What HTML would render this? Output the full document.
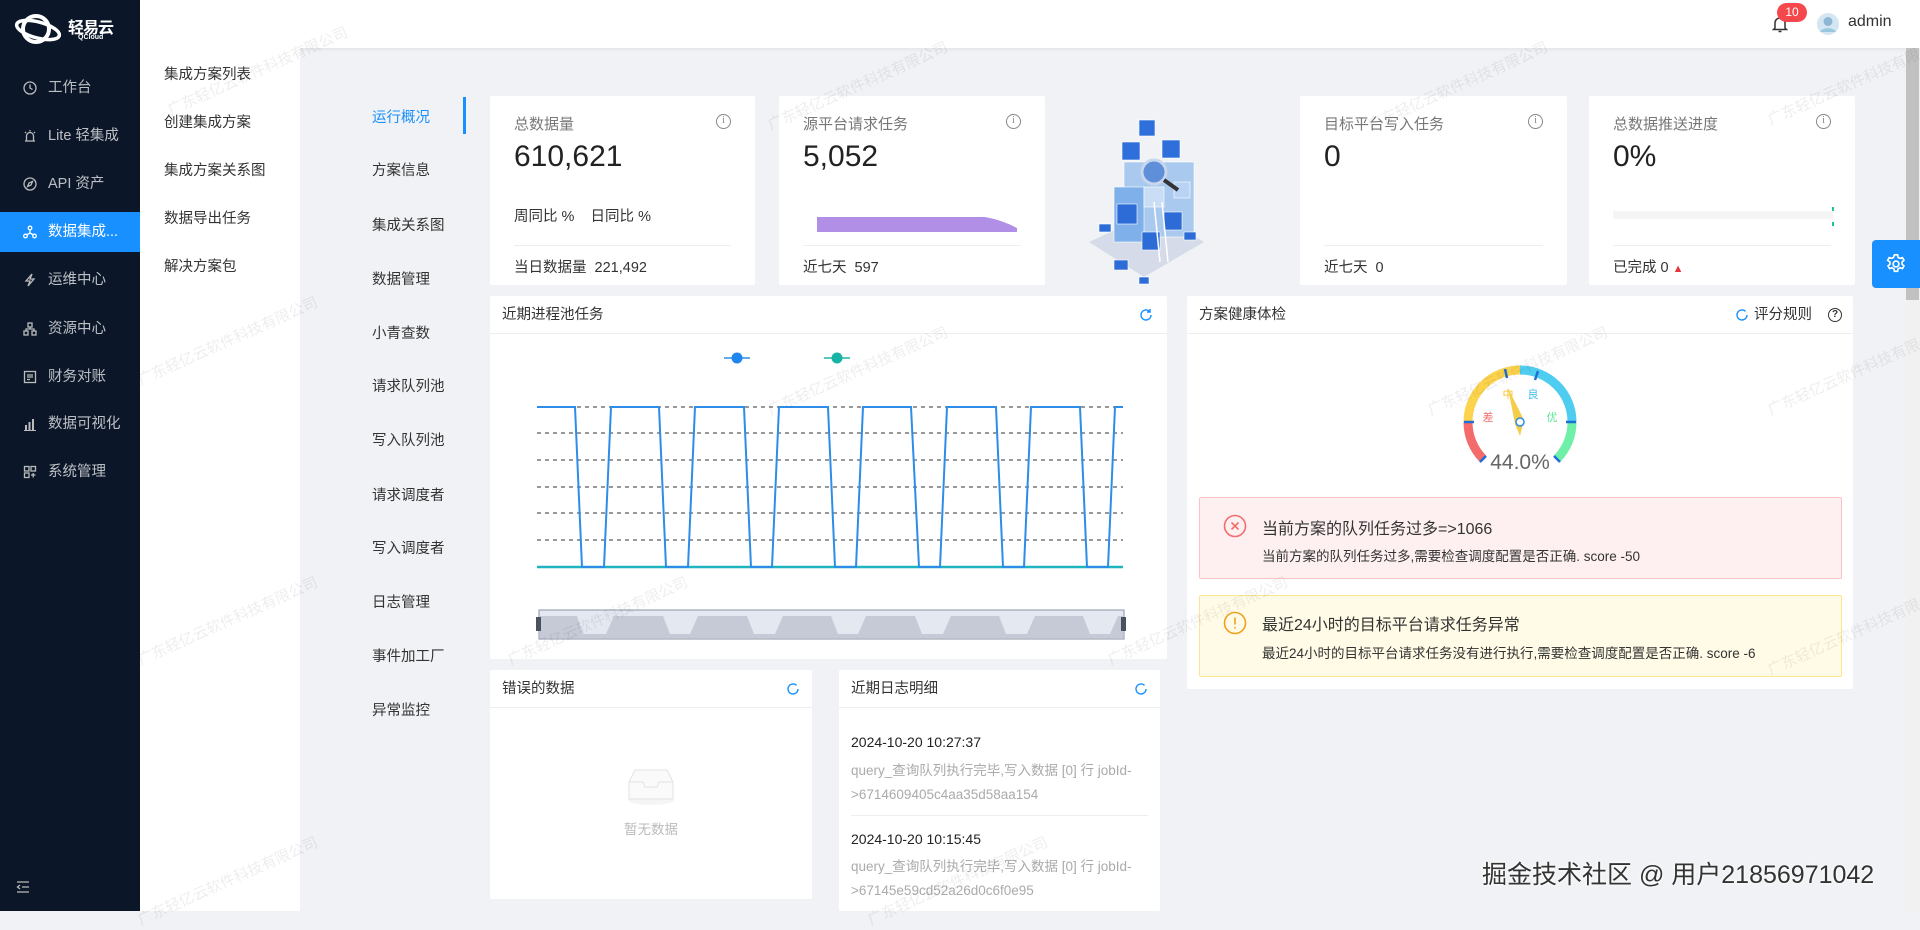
<!DOCTYPE html>
<html><head><meta charset="utf-8">
<style>
*{margin:0;padding:0;box-sizing:border-box}
body{width:1920px;height:911px;overflow:hidden;background:#f0f2f5;font-family:"Liberation Sans","Noto Sans CJK SC",sans-serif;color:#333;position:relative}
.a{position:absolute}
.side{left:0;top:0;width:140px;height:911px;background:#0b1729}
.mi{position:absolute;left:0;width:140px;height:40px;color:rgba(255,255,255,.72);font-size:14.5px;line-height:40px;padding-left:48px}
.mi svg{position:absolute;left:23px;top:13px}
.mi.on{background:#1890ff;color:#fff}
.hdr{left:140px;top:0;width:1780px;height:48px;background:#fff;box-shadow:0 1px 4px rgba(0,21,41,.08)}
.sub{left:140px;top:48px;width:160px;height:863px;background:#fff}
.si{position:absolute;left:24px;font-size:14.5px;color:#333}
.ti{position:absolute;left:372px;font-size:14.5px;color:#333}
.card{position:absolute;background:#fff;border-radius:2px}
.ct{position:absolute;left:24px;top:17px;font-size:15px;color:#777}
.num{position:absolute;left:24px;top:44px;font-size:30px;color:#222}
.info{position:absolute;right:24px;top:18px;width:15px;height:15px;border:1.3px solid #888;border-radius:50%;font-size:10px;line-height:12px;text-align:center;color:#888;font-family:"Liberation Serif",serif}
.dv{position:absolute;left:24px;right:24px;top:149px;border-top:1px solid #eee}
.ft{position:absolute;left:24px;top:160px;font-size:14.5px;color:#333}
.ph{position:absolute;left:0;right:0;top:0;height:38px;border-bottom:1px solid #eee;font-size:14.5px;line-height:38px;padding-left:12px;color:#333}
.wm{position:absolute;font-size:15px;color:rgba(0,0,0,.07);transform:rotate(-24deg);white-space:nowrap;pointer-events:none}
</style></head><body>

<div class="a side">
  <svg class="a" style="left:14px;top:13px" width="48" height="32" viewBox="0 0 48 32"><ellipse cx="22" cy="16" rx="13" ry="13" fill="none" stroke="#fff" stroke-width="4"/><ellipse cx="24" cy="17" rx="22" ry="8" fill="none" stroke="#fff" stroke-width="3.5" transform="rotate(15 24 17)"/></svg>
  <div class="a" style="left:68px;top:14px;color:#fff;font-size:16px;font-weight:bold;letter-spacing:-1px">轻易云</div>
  <div class="a" style="left:78px;top:34px;color:#fff;font-size:7px;font-weight:bold">QCloud</div>
  <div class="mi" style="top:68px"><svg width="14" height="14" viewBox="0 0 14 14" fill="none" stroke="#bbb" stroke-width="1.3"><circle cx="7" cy="7" r="6"/><path d="M7 3.5V7l2.5 1.5"/></svg>工作台</div>
  <div class="mi" style="top:116px"><svg width="14" height="14" viewBox="0 0 14 14" fill="none" stroke="#bbb" stroke-width="1.3"><path d="M2 12h10M3.5 12V7a3.5 3.5 0 0 1 7 0v5M7 1v1.5M2 3l1 1M12 3l-1 1"/></svg>Lite 轻集成</div>
  <div class="mi" style="top:164px"><svg width="14" height="14" viewBox="0 0 14 14" fill="none" stroke="#bbb" stroke-width="1.3"><circle cx="7" cy="7" r="6"/><path d="M9.5 4.5L6 6 4.5 9.5 8 8z"/></svg>API 资产</div>
  <div class="mi on" style="top:212px"><svg width="14" height="14" viewBox="0 0 14 14" fill="none" stroke="#fff" stroke-width="1.3"><circle cx="7" cy="3" r="1.8"/><circle cx="2.5" cy="11" r="1.8"/><circle cx="11.5" cy="11" r="1.8"/><path d="M7 5v3L3.5 10M7 8l3.5 2"/></svg>数据集成...</div>
  <div class="mi" style="top:260px"><svg width="14" height="14" viewBox="0 0 14 14" fill="none" stroke="#bbb" stroke-width="1.3"><path d="M9 1L3 8h4l-2 5 6-7H7z"/></svg>运维中心</div>
  <div class="mi" style="top:309px"><svg width="14" height="14" viewBox="0 0 14 14" fill="none" stroke="#bbb" stroke-width="1.3"><rect x="5" y="1" width="4" height="4"/><rect x="1" y="9" width="4" height="4"/><rect x="9" y="9" width="4" height="4"/><path d="M7 5v2M3 9V7h8v2"/></svg>资源中心</div>
  <div class="mi" style="top:357px"><svg width="14" height="14" viewBox="0 0 14 14" fill="none" stroke="#bbb" stroke-width="1.3"><rect x="1.5" y="1.5" width="11" height="11"/><path d="M4 5h6M4 7h6M4 9.5h3"/></svg>财务对账</div>
  <div class="mi" style="top:404px"><svg width="14" height="14" viewBox="0 0 14 14" fill="#bbb"><path d="M1 13h12v1H1zM2 8h2v5H2zM5.5 5h2v8h-2zM9 2h2v11H9z"/></svg>数据可视化</div>
  <div class="mi" style="top:452px"><svg width="14" height="14" viewBox="0 0 14 14" fill="none" stroke="#bbb" stroke-width="1.3"><rect x="1.5" y="1.5" width="4.5" height="4.5"/><rect x="8" y="1.5" width="4.5" height="4.5"/><rect x="1.5" y="8" width="4.5" height="4.5"/><path d="M8 10h4.5M10.2 8v4.5"/></svg>系统管理</div>
  <svg class="a" style="left:16px;top:880px" width="14" height="14" viewBox="0 0 14 14" fill="none" stroke="#bbb" stroke-width="1.3"><path d="M1 2h12M6 7h7M1 12h12M4 5L1.5 7 4 9"/></svg>
</div>

<div class="a hdr"></div>
<svg class="a" style="left:1772px;top:15px" width="16" height="18" viewBox="0 0 16 18" fill="none" stroke="#333" stroke-width="1.5"><path d="M3 13V8a5 5 0 0 1 10 0v5l1.5 1.5h-13zM6.5 16.5h3"/></svg>
<div class="a" style="left:1777px;top:3px;width:30px;height:19px;background:#f5484d;border-radius:10px;color:#fff;font-size:12px;line-height:19px;text-align:center">10</div>
<svg class="a" style="left:1817px;top:13px" width="22" height="22" viewBox="0 0 22 22"><circle cx="11" cy="11" r="11" fill="#d3e6f2"/><circle cx="11" cy="8.5" r="4.5" fill="#8fb7d5"/><path d="M3 19c2-5 14-5 16 0" fill="#9ac7e0"/></svg>
<div class="a" style="left:1848px;top:13px;font-size:16px;color:#333">admin</div>

<div class="a sub">
  <div class="si" style="top:15px">集成方案列表</div>
  <div class="si" style="top:63px">创建集成方案</div>
  <div class="si" style="top:111px">集成方案关系图</div>
  <div class="si" style="top:159px">数据导出任务</div>
  <div class="si" style="top:207px">解决方案包</div>
</div>

<div class="ti" style="top:106px;color:#1890ff">运行概况</div>
<div class="a" style="left:463px;top:97px;width:3px;height:37px;background:#1890ff"></div>
<div class="ti" style="top:159px">方案信息</div>
<div class="ti" style="top:214px">集成关系图</div>
<div class="ti" style="top:268px">数据管理</div>
<div class="ti" style="top:322px">小青查数</div>
<div class="ti" style="top:375px">请求队列池</div>
<div class="ti" style="top:429px">写入队列池</div>
<div class="ti" style="top:484px">请求调度者</div>
<div class="ti" style="top:537px">写入调度者</div>
<div class="ti" style="top:591px">日志管理</div>
<div class="ti" style="top:645px">事件加工厂</div>
<div class="ti" style="top:699px">异常监控</div>

<div class="card" style="left:490px;top:96px;width:265px;height:189px">
  <div class="ct">总数据量</div><div class="info">i</div>
  <div class="num">610,621</div>
  <div class="a" style="left:24px;top:109px;font-size:14.5px">周同比 %&nbsp;&nbsp;&nbsp;&nbsp;日同比 %</div>
  <div class="dv"></div><div class="ft">当日数据量&nbsp;&nbsp;221,492</div>
</div>
<div class="card" style="left:779px;top:96px;width:266px;height:189px">
  <div class="ct">源平台请求任务</div><div class="info">i</div>
  <div class="num">5,052</div>
  <svg class="a" style="left:38px;top:121px" width="200" height="15"><path d="M0 0H168Q185 3 200 11V15H0z" fill="#b28fe6"/></svg>
  <div class="dv"></div><div class="ft">近七天&nbsp;&nbsp;597</div>
</div>
<svg class="a" style="left:1084px;top:92px" width="145" height="200" viewBox="0 0 145 200">
  <path d="M5 150L70 120L120 150L60 185z" fill="#d5dbe8"/>
  <g stroke="#fff" stroke-width=".6">
  <rect x="40" y="70" width="70" height="75" fill="#a9c9ee"/>
  <rect x="30" y="95" width="30" height="55" fill="#7fb0ea"/>
  <rect x="38" y="50" width="18" height="18" fill="#2f6fdb"/>
  <rect x="78" y="48" width="18" height="18" fill="#2f6fdb"/>
  <rect x="55" y="28" width="16" height="16" fill="#2f6fdb"/>
  <rect x="33" y="112" width="20" height="20" fill="#2d6bd6"/>
  <rect x="80" y="120" width="18" height="18" fill="#2d6bd6"/>
  <rect x="58" y="140" width="18" height="18" fill="#2d6bd6"/>
  <rect x="60" y="95" width="20" height="20" fill="#c9ddf5"/>
  <rect x="90" y="90" width="16" height="16" fill="#b8d3f3"/>
  <rect x="15" y="132" width="12" height="8" fill="#2d6bd6"/>
  <rect x="30" y="168" width="14" height="10" fill="#2d6bd6"/>
  <rect x="100" y="140" width="12" height="8" fill="#2d6bd6"/>
  <rect x="55" y="185" width="10" height="7" fill="#2d6bd6"/>
  </g>
  <circle cx="70" cy="80" r="12" fill="#5f8fd8" stroke="#c8d6ee" stroke-width="3"/>
  <path d="M80 88l14 10" stroke="#333" stroke-width="4"/>
  <path d="M70 110l6 60M78 110l6 60" stroke="#fff" stroke-width="1.5"/>
</svg>
<div class="card" style="left:1300px;top:96px;width:267px;height:189px">
  <div class="ct">目标平台写入任务</div><div class="info">i</div>
  <div class="num">0</div>
  <div class="dv"></div><div class="ft">近七天&nbsp;&nbsp;0</div>
</div>
<div class="card" style="left:1589px;top:96px;width:266px;height:189px">
  <div class="ct">总数据推送进度</div><div class="info">i</div>
  <div class="num">0%</div>
  <div class="a" style="left:24px;top:115px;width:220px;height:8px;background:#f5f5f5"></div>
  <div class="a" style="left:243px;top:111px;width:2px;height:4px;background:#1fc29a"></div>
  <div class="a" style="left:243px;top:126px;width:2px;height:4px;background:#1fc29a"></div>
  <div class="dv"></div><div class="ft">已完成 0 <span style="color:#e8343c;font-size:11px">▲</span></div>
</div>

<div class="card" style="left:490px;top:296px;width:677px;height:363px">
  <div class="ph">近期进程池任务</div>
  <svg class="a" style="right:14px;top:12px" width="14" height="14" viewBox="0 0 14 14" fill="none" stroke="#1890ff" stroke-width="1.4"><path d="M12 7a5 5 0 1 1-1.5-3.6M11 1v3H8"/></svg>
</div>
<svg class="a" style="left:0;top:0" width="1920" height="911">
  <g stroke="#333" stroke-width="1" stroke-dasharray="4 4">
    <path d="M537 407H1123M537 433H1123M537 460H1123M537 487H1123M537 513H1123M537 540H1123"/>
  </g>
  <path d="M537 567H1123" stroke="#1fb5c0" stroke-width="2.5"/>
  <polyline fill="none" stroke="#2d8de8" stroke-width="2" points="537,407 575,407 582,567 604,567 611,407 659,407 666,567 688,567 695,407 744,407 751,567 772,567 779,407 828,407 835,567 856,567 863,407 911,407 919,567 940,567 947,407 996,407 1003,567 1024,567 1031,407 1080,407 1087,567 1108,567 1115,407 1123,407"/>
  <path d="M724 358h26" stroke="#2d8de8" stroke-width="1.5"/><circle cx="737" cy="358" r="5.5" fill="#1f86f0"/>
  <path d="M824 358h26" stroke="#1fb5a8" stroke-width="1.5"/><circle cx="837" cy="358" r="5.5" fill="#17b3a3"/>
  <rect x="539" y="610" width="585" height="29" fill="#e4e8f1" stroke="#8a93a6"/>
  <path d="M540 616H577L583 634H606L614 616H663L670 634H690L698 616H747L754 634H775L783 616H831L838 634H858L866 616H915L922 634H943L951 616H999L1006 634H1027L1035 616H1083L1090 634H1110L1118 616H1123V638H540z" fill="#c6cad6"/>
  <rect x="536" y="617" width="5" height="14" fill="#4a5260"/><rect x="1121" y="617" width="5" height="14" fill="#4a5260"/>
</svg>

<div class="card" style="left:1187px;top:296px;width:666px;height:393px">
  <div class="ph" style="padding-left:12px">方案健康体检</div>
  <div class="a" style="right:41px;top:0;line-height:38px;font-size:14.5px">评分规则</div>
  <svg class="a" style="right:104px;top:12px" width="14" height="14" viewBox="0 0 14 14" fill="none" stroke="#1890ff" stroke-width="1.4"><path d="M12 7a5 5 0 1 1-1.5-3.6"/></svg>
  <div class="a" style="right:11px;top:12px;width:14px;height:14px;border:1.3px solid #333;border-radius:50%;font-size:10px;line-height:11px;text-align:center;font-weight:bold">?</div>
</div>
<svg class="a" style="left:1450px;top:355px" width="140" height="130" viewBox="1450 355 140 130">
  <g fill="none" stroke-width="9">
    <path d="M1483.1 458.9A52 52 0 0 1 1468 422" stroke="#f46b6b"/>
    <path d="M1468 422A52 52 0 0 1 1520 370" stroke="#fcd34d"/>
    <path d="M1520 370A52 52 0 0 1 1572 422" stroke="#4fcdf0"/>
    <path d="M1572 422A52 52 0 0 1 1556.9 458.9" stroke="#6ef0a8"/>
  </g>
  <g stroke="#1f6fd6" stroke-width="2.5">
    <path d="M1464 422h10M1566 422h10M1480 462l6-6M1560 462l-6-6M1505 369l2 9M1538 371l-3 9"/>
  </g>
  <text x="1488" y="421" font-size="11" fill="#f46b6b" text-anchor="middle" font-family="Noto Sans CJK SC">差</text>
  <text x="1508" y="398" font-size="11" fill="#f4c22b" text-anchor="middle" font-family="Noto Sans CJK SC">中</text>
  <text x="1533" y="398" font-size="11" fill="#3fc0ea" text-anchor="middle" font-family="Noto Sans CJK SC">良</text>
  <text x="1552" y="421" font-size="11" fill="#5ee59a" text-anchor="middle" font-family="Noto Sans CJK SC">优</text>
  <path d="M1508 388L1524 420L1520 436L1515 424z" fill="#f5cd48"/>
  <circle cx="1520" cy="422" r="4" fill="#fff" stroke="#2d8de8" stroke-width="1.5"/>
  <text x="1520" y="469" font-size="21" fill="#666" text-anchor="middle" font-family="Liberation Sans">44.0%</text>
</svg>
<div class="a" style="left:1199px;top:497px;width:643px;height:82px;background:#fef0f0;border:1px solid #fbc4c4;border-radius:2px">
  <svg class="a" style="left:23px;top:16px" width="24" height="24" viewBox="0 0 24 24" fill="none" stroke="#f56c6c" stroke-width="1.6"><circle cx="12" cy="12" r="10.5"/><path d="M8.5 8.5l7 7M15.5 8.5l-7 7"/></svg>
  <div class="a" style="left:62px;top:17px;font-size:16px;color:#333">当前方案的队列任务过多=&gt;1066</div>
  <div class="a" style="left:62px;top:47px;font-size:13.5px;color:#333">当前方案的队列任务过多,需要检查调度配置是否正确. score -50</div>
</div>
<div class="a" style="left:1199px;top:595px;width:643px;height:82px;background:#fffbe6;border:1px solid #ffe58f;border-radius:2px">
  <svg class="a" style="left:23px;top:15px" width="24" height="24" viewBox="0 0 24 24" fill="none" stroke="#f0a020" stroke-width="1.6"><circle cx="12" cy="12" r="10.5"/><path d="M12 6.5v7M12 16v1.5"/></svg>
  <div class="a" style="left:62px;top:15px;font-size:16px;color:#333">最近24小时的目标平台请求任务异常</div>
  <div class="a" style="left:62px;top:46px;font-size:13.5px;color:#333">最近24小时的目标平台请求任务没有进行执行,需要检查调度配置是否正确. score -6</div>
</div>

<div class="card" style="left:490px;top:670px;width:322px;height:229px">
  <div class="ph">错误的数据</div>
  <svg class="a" style="right:12px;top:12px" width="14" height="14" viewBox="0 0 14 14" fill="none" stroke="#1890ff" stroke-width="1.4"><path d="M12 7a5 5 0 1 1-1.5-3.6"/></svg>
  <svg class="a" style="left:137px;top:96px" width="48" height="40" viewBox="0 0 48 40"><ellipse cx="24" cy="34" rx="23" ry="5" fill="#f5f5f5"/><path d="M8 4h32l6 12v17H2V16z" fill="#fafafa" stroke="#e3e3e3"/><path d="M2 16h14l2 5h12l2-5h14" fill="none" stroke="#e3e3e3"/></svg>
  <div class="a" style="left:0;width:322px;top:148px;text-align:center;font-size:13.5px;color:#bbb">暂无数据</div>
</div>

<div class="card" style="left:839px;top:670px;width:321px;height:241px">
  <div class="ph">近期日志明细</div>
  <svg class="a" style="right:12px;top:12px" width="14" height="14" viewBox="0 0 14 14" fill="none" stroke="#1890ff" stroke-width="1.4"><path d="M12 7a5 5 0 1 1-1.5-3.6"/></svg>
  <div class="a" style="left:12px;top:64px;font-size:14px;color:#222">2024-10-20 10:27:37</div>
  <div class="a" style="left:12px;top:89px;font-size:13.5px;color:#aaa;line-height:24px;width:300px">query_查询队列执行完毕,写入数据 [0] 行 jobId-<br>&gt;6714609405c4aa35d58aa154</div>
  <div class="a" style="left:12px;right:12px;top:145px;border-top:1px solid #eee"></div>
  <div class="a" style="left:12px;top:161px;font-size:14px;color:#222">2024-10-20 10:15:45</div>
  <div class="a" style="left:12px;top:185px;font-size:13.5px;color:#aaa;line-height:24px;width:300px">query_查询队列执行完毕,写入数据 [0] 行 jobId-<br>&gt;67145e59cd52a26d0c6f0e95</div>
</div>

<div class="a" style="left:1905px;top:48px;width:15px;height:863px;background:#f1f1f1"></div>
<div class="a" style="left:1906px;top:48px;width:13px;height:252px;background:#c1c1c1"></div>
<div class="a" style="left:1872px;top:240px;width:48px;height:48px;background:#1890ff;border-radius:4px 0 0 4px"></div>
<svg class="a" style="left:1885px;top:253px" width="22" height="22" viewBox="0 0 24 24" fill="none" stroke="#fff" stroke-width="1.8"><circle cx="12" cy="12" r="3.2"/><path d="M10.3 2h3.4l.6 2.8 2 1.1 2.7-.9 1.7 2.9-2.1 1.9v2.4l2.1 1.9-1.7 2.9-2.7-.9-2 1.1-.6 2.8h-3.4l-.6-2.8-2-1.1-2.7.9-1.7-2.9 2.1-1.9V9.8L2.9 7.9l1.7-2.9 2.7.9 2-1.1z"/></svg>

<div class="wm" style="left:160px;top:60px">广东轻亿云软件科技有限公司</div>
<div class="wm" style="left:760px;top:75px">广东轻亿云软件科技有限公司</div>
<div class="wm" style="left:1360px;top:75px">广东轻亿云软件科技有限公司</div>
<div class="wm" style="left:1760px;top:70px">广东轻亿云软件科技有限公司</div>
<div class="wm" style="left:130px;top:330px">广东轻亿云软件科技有限公司</div>
<div class="wm" style="left:760px;top:360px">广东轻亿云软件科技有限公司</div>
<div class="wm" style="left:1420px;top:360px">广东轻亿云软件科技有限公司</div>
<div class="wm" style="left:1760px;top:360px">广东轻亿云软件科技有限公司</div>
<div class="wm" style="left:130px;top:610px">广东轻亿云软件科技有限公司</div>
<div class="wm" style="left:500px;top:610px">广东轻亿云软件科技有限公司</div>
<div class="wm" style="left:1100px;top:610px">广东轻亿云软件科技有限公司</div>
<div class="wm" style="left:1760px;top:620px">广东轻亿云软件科技有限公司</div>
<div class="wm" style="left:130px;top:870px">广东轻亿云软件科技有限公司</div>
<div class="wm" style="left:860px;top:870px">广东轻亿云软件科技有限公司</div>

<div class="a" style="left:1482px;top:855px;font-size:25px;color:#333;text-shadow:0 0 3px #fff,0 0 3px #fff">掘金技术社区 @ 用户2185697104​2</div>
</body></html>
